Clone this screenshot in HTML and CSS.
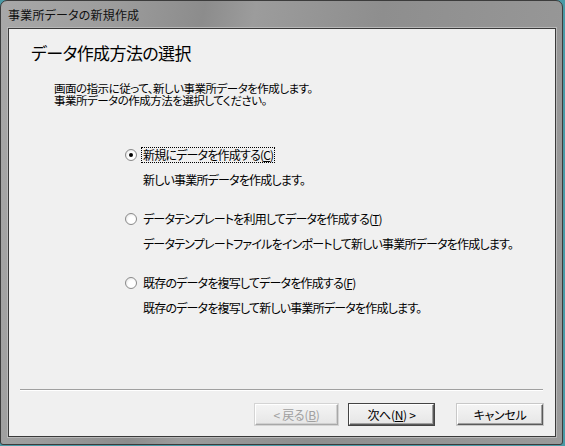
FILE: index.html
```html
<!DOCTYPE html>
<html lang="ja">
<head>
<meta charset="utf-8">
<title>事業所データの新規作成</title>
<link rel="stylesheet" href="styles.css">
</head>
<body>
<div class="window">
  <div class="titlebar">事業所データの新規作成</div>
  <div class="client">
    <div class="header">
      <h1 class="heading">データ作成方法の選択</h1>
      <p class="intro"><span class="intro-line">画面の指示に従って、新しい事業所データを作成します。</span><span class="intro-line">事業所データの作成方法を選択してください。</span></p>
    </div>
    <div class="options">
      <div class="option">
        <span class="radio checked"></span>
        <span class="label focus">新規にデータを作成する(<u>C</u>)</span>
        <span class="desc">新しい事業所データを作成します。</span>
      </div>
      <div class="option">
        <span class="radio"></span>
        <span class="label">データテンプレートを利用してデータを作成する(<u>T</u>)</span>
        <span class="desc">データテンプレートファイルをインポートして新しい事業所データを作成します。</span>
      </div>
      <div class="option">
        <span class="radio"></span>
        <span class="label">既存のデータを複写してデータを作成する(<u>F</u>)</span>
        <span class="desc">既存のデータを複写して新しい事業所データを作成します。</span>
      </div>
    </div>
    <div class="footer">
      <div class="separator"></div>
      <div class="buttons">
        <button class="btn disabled">&lt; 戻る(<u>B</u>)</button>
        <button class="btn next">次へ(<u>N</u>) &gt;</button>
        <button class="btn cancel">キャンセル</button>
      </div>
    </div>
  </div>
</div>
</body>
</html>
```
FILE: styles.css
```css
html, body {
  margin: 0;
  padding: 0;
  width: 565px;
  height: 446px;
  overflow: hidden;
  background: #4a9aa6;
}
body {
  font-family: "Noto Sans CJK JP", "Noto Sans", sans-serif;
  font-size: 12px;
  color: #000;
  font-feature-settings: "palt";
}
.window {
  box-sizing: border-box;
  width: 563px;
  height: 445px;
  display: flex;
  flex-direction: column;
  padding: 0 6px 7px 7px;
  border: 1px solid #3c3c3c;
  border-radius: 7px 7px 3px 3px;
  background: linear-gradient(100deg, #a8a8a8 0%, #9c9c9c 18%, #8c8c8c 32%, #9c9c9c 40%, #8e8e8e 60%, #9a9a9a 100%);
}
.titlebar {
  height: 27px;
  line-height: 28px;
  font-size: 12px;
  letter-spacing: 0.2px;
  color: #101010;
  white-space: nowrap;
}
.client {
  flex: 1;
  display: flex;
  flex-direction: column;
  background: #f0f0f0;
  border: 1px solid #3a3a3a;
  box-shadow: 0 0 0 1px #b8b8b8;
}
.header {
  padding: 14px 0 0 22px;
}
.heading {
  margin: 0;
  font-size: 17px;
  font-weight: normal;
  letter-spacing: -0.6px;
  line-height: 20px;
  color: #000;
}
.intro {
  margin: 19px 0 0 23px;
  display: flex;
  flex-direction: column;
  font-size: 11.5px;
  letter-spacing: -0.5px;
}
.intro-line {
  display: block;
  height: 12px;
  line-height: 12px;
  overflow: visible;
}
.options {
  display: flex;
  flex-direction: column;
  gap: 24px;
  margin: 41px 0 0 116px;
  letter-spacing: -0.8px;
}
.option {
  display: grid;
  grid-template-columns: 13px auto;
  column-gap: 5px;
  row-gap: 10px;
  align-items: center;
}
.radio {
  box-sizing: border-box;
  width: 12px;
  height: 12px;
  border-radius: 50%;
  border: 1px solid #8a8a8a;
  background: radial-gradient(circle at 60% 60%, #ffffff 40%, #dcdcdc 100%);
  position: relative;
}
.radio.checked::after {
  content: "";
  position: absolute;
  left: 3px;
  top: 3px;
  width: 4px;
  height: 4px;
  border-radius: 50%;
  background: #000;
}
.label {
  line-height: 14px;
  justify-self: start;
  padding: 0 1px;
  border: 1px dotted transparent;
  margin-left: -2px;
}
.label.focus {
  border-color: #000;
}
.desc {
  grid-column: 2;
  line-height: 14px;
}
.footer {
  margin-top: auto;
  padding: 0 12px 11px 11px;
}
.separator {
  border-top: 1px solid #a0a0a0;
  border-bottom: 1px solid #ffffff;
  margin-bottom: 13px;
}
.buttons {
  display: flex;
  justify-content: flex-end;
}
.btn {
  box-sizing: border-box;
  width: 85px;
  height: 21px;
  padding: 0;
  font-family: inherit;
  font-size: 12px;
  font-feature-settings: "palt";
  letter-spacing: -0.3px;
  line-height: 17px;
  color: #000;
  background: linear-gradient(#f4f4f4, #e6e6e6);
  border: 1px solid;
  border-color: #ffffff #5a5a5a #5a5a5a #ffffff;
  box-shadow: inset -1px -1px 0 #a0a0a0, 0 0 0 1px #c8c8c8;
}
.btn.disabled {
  color: #a0a0a0;
  width: 83px;
  border-color: #ffffff #a8a8a8 #a8a8a8 #ffffff;
  box-shadow: inset -1px -1px 0 #d0d0d0, 0 0 0 1px #d4d4d4;
}
.btn.next {
  margin-left: 11px;
  box-shadow: inset -1px -1px 0 #a0a0a0, 0 0 0 1px #444;
}
.btn.cancel {
  margin-left: 23px;
  width: 86px;
}
```
